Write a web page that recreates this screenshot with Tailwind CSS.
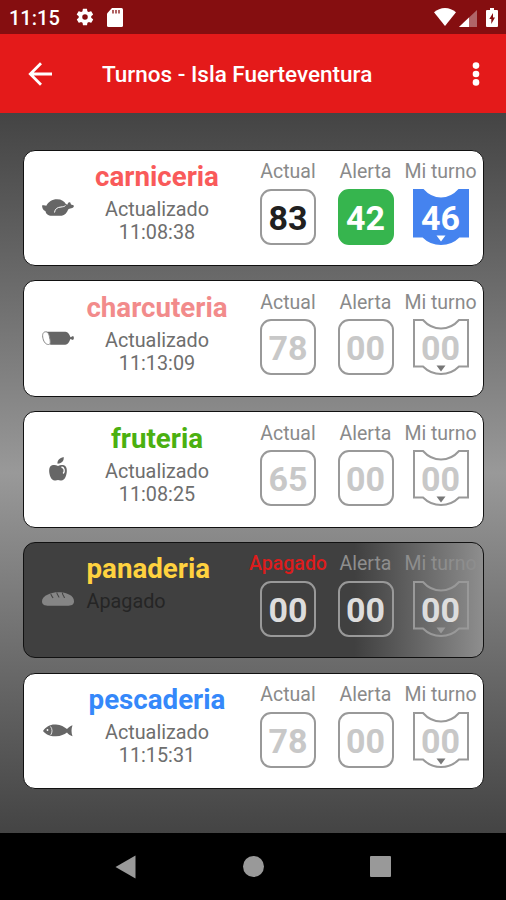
<!DOCTYPE html>
<html lang="es">
<head>
    <meta charset="UTF-8">
    <meta name="viewport" content="width=device-width, initial-scale=1.0">
    <title>Turnos - Isla Fuerteventura</title>
    <script src="https://cdn.jsdelivr.net/npm/@tailwindcss/browser@4"></script>
</head>
<body class="flex flex-col w-[506px] h-[900px] overflow-hidden bg-black font-['Roboto',sans-serif]">
    <!-- status bar -->
    <div class="flex items-center justify-between h-[34px] bg-[#850e10] text-white pl-[9px] pr-2 shrink-0">
        <div class="flex items-center">
            <span class="text-[20px] font-medium leading-none w-[66px] pt-px">11:15</span>
            <svg class="w-[20px] h-[20px]" viewBox="0 0 24 24" fill="currentColor"><path d="M19.4 13c.1-.3.1-.6.1-1s0-.7-.1-1l2.100-1.600c.2-.2.2-.4.100-.6l-2-3.500c-.1-.2-.4-.3-.6-.2l-2.500 1c-.5-.4-1.100-.7-1.700-1l-.4-2.600c0-.2-.2-.4-.5-.4h-4c-.2 0-.4.200-.5.400l-.4 2.600c-.6.300-1.200.600-1.700 1l-2.500-1c-.2-.1-.5 0-.6.200l-2 3.500c-.1.200-.1.500.1.600L4.500 11c0 .3-.1.700-.1 1s0 .7.100 1l-2.100 1.600c-.2.2-.2.400-.1.600l2 3.500c.1.200.4.300.6.200l2.500-1c.5.400 1.100.7 1.700 1l.4 2.600c0 .2.200.4.500.4h4c.2 0 .4-.2.500-.4l.4-2.600c.6-.3 1.200-.6 1.700-1l2.500 1c.2.100.5 0 .6-.2l2-3.500c.1-.2.100-.5-.1-.6zM12 15.300a3.300 3.300 0 1 1 0-6.600 3.300 3.300 0 0 1 0 6.600z"/></svg>
            <svg class="w-4 h-[19px] ml-[12px]" viewBox="0 0 16 19"><path fill="#fff" d="M5 0h9.500q1.500 0 1.500 1.500v16q0 1.500-1.500 1.500h-13Q0 19 0 17.500V5.500z"/><path stroke="#850e10" stroke-width="1.300" d="M6 2v3.500M9 2v3.500M12 2v3.500"/></svg>
        </div>
        <div class="flex items-center">
            <svg class="w-[22px] h-[18px] mr-[3px]" viewBox="0 0 22 18"><path fill="#fff" d="M11 18 0 4.200C3 1.700 7 0 11 0s8 1.700 11 4.200z"/></svg>
            <svg class="w-[18px] h-[17px] mr-[9px] mt-0.5" viewBox="0 0 18 17"><path fill="#b06568" d="M18 0v17H0z"/><path fill="#fff" d="M10 7.600V17H0z"/></svg>
            <svg class="w-3 h-[19px]" viewBox="0 0 12 19"><path fill="#fff" d="M4 0h4v2h3q1 0 1 1v15q0 1-1 1H1q-1 0-1-1V3q0-1 1-1h3z"/><path fill="#850e10" d="M7 5 3.300 11H5.300v5L9 9.500H7z"/></svg>
        </div>
    </div>

    <!-- app bar -->
    <div class="flex items-center h-[79px] bg-[#e41a1a] text-white pl-7 pr-[18px] shrink-0">
        <svg class="w-6 h-6" viewBox="0 0 24 24" fill="none" stroke="currentColor" stroke-width="2.800"><path d="M24 12H2.500M13 1.300 2.300 12 13 22.700"/></svg>
        <h1 class="ml-[50px] grow pt-0.5 text-[22.500px] font-medium leading-none whitespace-nowrap">Turnos - Isla Fuerteventura</h1>
        <svg class="w-6 h-6" viewBox="0 0 24 24" fill="currentColor"><circle cx="12" cy="3.600" r="3.300"/><circle cx="12" cy="12" r="3.300"/><circle cx="12" cy="20.400" r="3.300"/></svg>
    </div>

    <!-- sections -->
    <main id="list" class="flex flex-col gap-[14.300px] h-[720px] shrink-0 pt-[36.500px] px-[22.500px] bg-linear-to-b from-[#444] via-[#999] to-[#444]"></main>

    <!-- navigation bar -->
    <div class="flex items-center h-[67px] shrink-0 pl-[115px]">
        <svg class="w-[21px] h-6" viewBox="0 0 21 24"><path fill="#999" d="M20.500.5v23L.5 12z"/></svg>
        <div class="w-[21px] h-[21px] rounded-full bg-[#999] ml-[107px]"></div>
        <div class="w-[21px] h-[21px] rounded-[1px] bg-[#999] ml-[106px]"></div>
    </div>

    <script>
        const icons = {
            chicken: `<path d="M0 6.500c1.500-.5 3-.3 4.300.2C6.500 2.800 10 .3 15 .3c4.500 0 7.500 2 9 5l1.700.300C25.500 4 27 2.700 28.300 3.500l.7 2 2.500.8c1 1.500-.5 2.900-2.200 2.900-1.500.300-2.300.700-3.100 1.200-1.200 3.300-3.500 5.800-6.500 6.300H8.500C5 16.200 4 14.500 3.500 12.300 1 11.300.2 9 0 6.500z"/><path d="M12.500 13.500c.5-3.500 2.500-5.200 6.500-5.500 2-.2 3.500-.500 4.500-1.500" fill="none" stroke="#fff" stroke-width="1"/>`,
            sausage: `<path d="M4 .8h19.500c2.500.2 4 2.700 5 5.500l2.500-1.200c1.200.8 1.200 3 0 3.800l-2.700-1c-1 3-2.500 5.600-5 5.800H8.500C6 12.500 4.500 3.500 4 .8z"/><path d="M3.500.8C1 1 0 3.500 1 7.500s3 6 5.500 6c2 0 2.200-2 1.200-6.500C7 3 6 .8 3.500.8z" fill="#fff" stroke="#888" stroke-width="1"/>`,
            apple: `<path d="M8.500 6.800C8 3.500 10.500 1 14.700 0c.3 3.500-1.300 6.300-6.200 6.800z"/><path d="M9 9C7 7.800 5 7.800 3 8.300-.5 9.500-.5 15 1.500 20c1 2.500 3 4 5 3.500l2.500-.4 2.500.4c2 .5 4-1 5-3.500 2-5 2-10.500-1.500-11.700-2-.5-4-.5-6 .7z"/><path d="M12.500 10c3 .8 3.500 4 1.700 6.500" fill="none" stroke="#fff" stroke-width="1.300"/>`,
            bread: `<path d="M5.500 13.700C1.500 13.700 0 11.700 0 9.300 0 6.500 2 4 6 2.500 10 .6 13 .3 16 .3s7 .2 11 2.200c3.500 1.500 5 4 5 6.800s-1.500 4.400-5.500 4.400z"/><path d="M9 1.500C8.500 3.500 10.500 4 11 6M15 .5c-.5 2 1.500 2.500 2 5M20.500.7C20 3 22 3.500 22.500 6" fill="none" stroke="#444" stroke-width="1.100"/>`,
            fish: `<path d="M0 7C3 2.500 7.500 0 13 .5c5 .3 8 2.500 11 4.500 1.300-1.500 3-2.800 5.500-3.800-1.300 3.500-1.300 7.500 0 11-2.500-.7-4.200-2-5.500-3.700-3 2-6 3.700-11 3.700C8 12.500 3 11 0 7z"/><path d="M7.500 2.500c2 2.500 2 6 .2 8.500" fill="none" stroke="#fff" stroke-width=".8"/><circle cx="4.500" cy="6" r=".9" fill="#fff"/>`
        };

        const rows = [
            { name: 'carniceria', color: 'text-[#f95a5a]', time: '11:08:38', icon: 'chicken', size: 'w-8 h-[17px]', view: '0 0 32 17', n: ['83', '42', '46'], live: true },
            { name: 'charcuteria', color: 'text-[#f28b8b]', time: '11:13:09', icon: 'sausage', size: 'w-8 h-[14px]', view: '0 0 32 14', n: ['78', '00', '00'] },
            { name: 'fruteria', color: 'text-[#4bb010]', time: '11:08:25', icon: 'apple', size: 'w-[18px] h-6', view: '0 0 18 24', n: ['65', '00', '00'] },
            { name: 'panaderia', color: 'text-[#ffd23f]', time: null, icon: 'bread', size: 'w-8 h-[14px]', view: '0 0 32 14', n: ['00', '00', '00'], off: true },
            { name: 'pescaderia', color: 'text-[#3588fa]', time: '11:15:31', icon: 'fish', size: 'w-[30px] h-[13px]', view: '0 0 30 13', n: ['78', '00', '00'] }
        ];

        function column(label, box, width, labelColor) {
            return `<div class="flex flex-col items-center shrink-0 ${width}">
                <div class="text-[19.500px] leading-[23px] whitespace-nowrap ${labelColor}">${label}</div>
                <div class="mt-[5.500px]">${box}</div>
            </div>`;
        }

        function square(num, style) {
            return `<div class="w-14 h-14 rounded-[11px] border-2 flex items-center justify-center text-[34px] font-bold leading-none pt-[2px] ${style}">${num}</div>`;
        }

        function ticket(num, fill, stroke, arrow, text) {
            return `<div class="relative w-14 h-14 flex items-center justify-center text-[34px] font-bold leading-none pt-[2px] ${text}">
                <svg class="absolute inset-0 w-14 h-14" viewBox="0 0 56 56">
                    <path d="M1 1h9q7.500 8.500 18 8.500T46 1h9v46.500h-9q-7.500 7.500-18 7.500t-18-7.500H1z" fill="${fill}" stroke="${stroke}" stroke-width="2"/>
                    <path d="M23.500 46.500h9L28 52.500z" fill="${arrow}"/>
                </svg>
                <span class="relative">${num}</span>
            </div>`;
        }

        document.getElementById('list').innerHTML = rows.map(r => {
            const card = r.off ? 'bg-linear-to-r from-[#404040] from-72% to-[#8e8e8e] to-100%' : 'bg-white';
            const num = r.off ? 'border-[#999] text-[#ddd]' : 'border-[#999] text-[#c8c8c8]';
            const label = r.off ? 'text-[#8e8e8e]' : 'text-[#8a8a8a]';
            return `<div class="flex h-[116.500px] shrink-0 rounded-xl border-[1.500px] border-[#111] pt-[9.500px] ${card}">
                <div class="w-[63px] pl-[6px] h-[94px] flex items-center justify-center shrink-0">
                    <svg class="${r.size}" viewBox="${r.view}" fill="${r.off ? '#858585' : '#666'}">${icons[r.icon]}</svg>
                </div>
                <div class="w-[141px] shrink-0 flex flex-col ${r.off ? 'items-start' : 'items-center'}">
                    <div class="text-[27.700px] font-bold leading-[34px] whitespace-nowrap ${r.color}">${r.name}</div>
                    ${r.off
                        ? `<div class="text-[19.800px] leading-[23px] mt-1 text-[#252525]">Apagado</div>`
                        : `<div class="text-[19.800px] leading-[23px] mt-1 text-center text-[#6e6e6e]">Actualizado<br>${r.time}</div>`}
                </div>
                <div class="flex ml-[22px]">
                    ${column(r.off ? 'Apagado' : 'Actual', square(r.n[0], r.live ? 'border-[#999] text-[#202020]' : num), 'w-[77px]', r.off ? 'text-[#dd1c1c] font-medium' : label)}
                    ${column('Alerta', square(r.n[1], r.live ? 'border-[#36b54e] bg-[#36b54e] text-white' : num), 'w-[78px]', label)}
                    ${column('Mi turno', r.live
                        ? ticket(r.n[2], '#4583ef', '#4583ef', '#fff', 'text-white')
                        : ticket(r.n[2], 'none', '#999', r.off ? '#999' : '#777', r.off ? 'text-[#ddd]' : 'text-[#c8c8c8]'), 'w-[72px]', label)}
                </div>
            </div>`;
        }).join('');
    </script>
</body>
</html>
